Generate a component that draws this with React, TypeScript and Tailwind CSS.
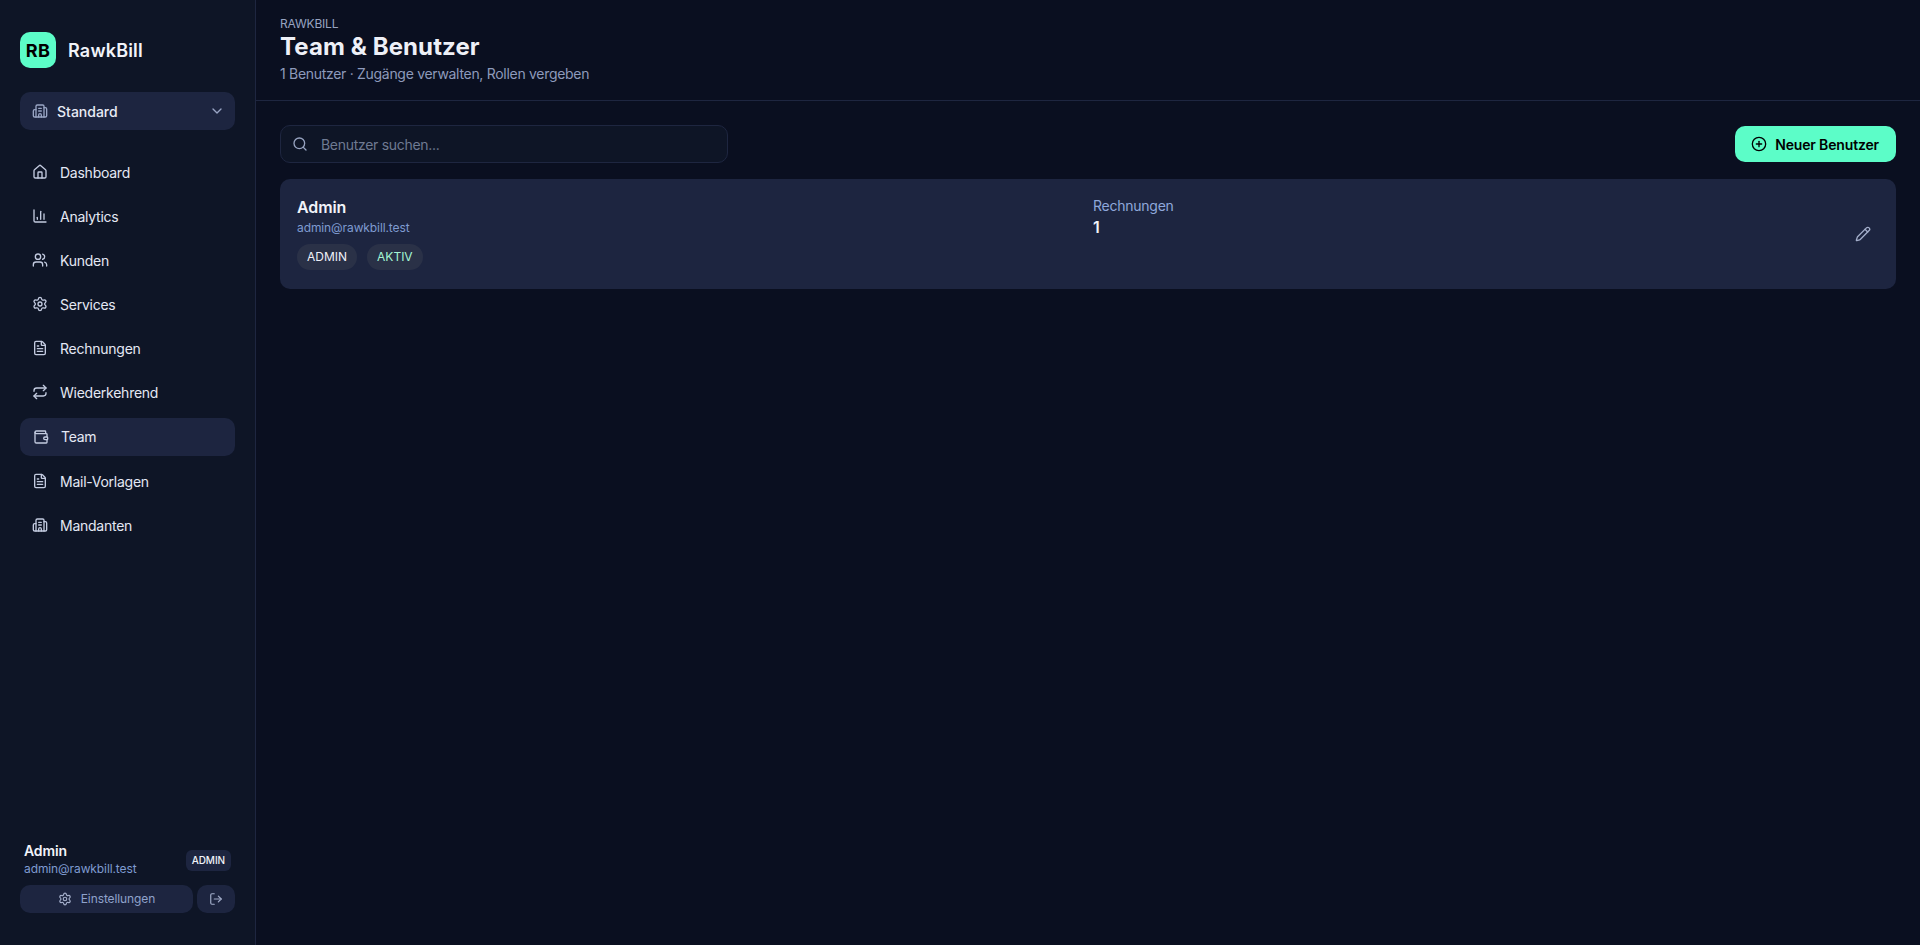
import {
  Building2,
  ChartColumn,
  ChevronDown,
  CirclePlus,
  FileText,
  House,
  LogOut,
  Pencil,
  Repeat,
  Search,
  Settings,
  Users,
  Wallet,
} from "lucide-react";

const navItems = [
  { label: "Dashboard", icon: House },
  { label: "Analytics", icon: ChartColumn },
  { label: "Kunden", icon: Users },
  { label: "Services", icon: Settings },
  { label: "Rechnungen", icon: FileText },
  { label: "Wiederkehrend", icon: Repeat },
  { label: "Team", icon: Wallet, active: true },
  { label: "Mail-Vorlagen", icon: FileText },
  { label: "Mandanten", icon: Building2 },
];

function Sidebar() {
  return (
    <aside className="flex h-[945px] w-[256px] shrink-0 flex-col border-r border-[#1e2640] bg-[#0e1526] px-5 pt-8 pb-[32px]">
      <div className="flex items-center gap-3">
        <div className="flex h-9 w-9 items-center justify-center rounded-[10px] bg-[#5cfdc8] text-[18px] font-bold tracking-[0.3px] text-black">RB</div>
        <span className="text-[18px] font-semibold tracking-[0.2px] text-[#f1f3f9]">RawkBill</span>
      </div>

      <button className="mt-6 flex h-[38px] w-full items-center rounded-[10px] bg-[#1d2540] pr-[10px] pl-3 text-[14px] font-medium text-[#e8ebf5]">
        <Building2 className="h-4 w-4 text-[#99a5c4]" />
        <span className="ml-[9px]">Standard</span>
        <ChevronDown className="ml-auto h-4 w-4 text-[#99a5c4]" />
      </button>

      <nav className="mt-[23px] flex flex-col gap-[6px]">
        {navItems.map((item) => {
          const Icon = item.icon;
          return (
            <a
              key={item.label}
              className={`flex h-[38px] items-center gap-3 rounded-[10px] text-[14px] tracking-[-0.25px] text-[#e4e8f4] ${item.active ? "my-[0.5px] bg-[#1d2540] pr-3 pl-[13px]" : "px-3"}`}
            >
              <Icon className="h-4 w-4 shrink-0 text-[#c3cbe0]" />
              {item.label}
            </a>
          );
        })}
      </nav>

      <div className="mt-auto">
        <div className="flex items-center justify-between px-1">
          <div>
            <div className="text-[14px] leading-[18px] font-semibold tracking-[-0.1px] text-[#f1f3f9]">Admin</div>
            <div className="text-[12px] leading-[18px] tracking-[-0.1px] text-[#7f9bd0]">admin@rawkbill.test</div>
          </div>
          <span className="rounded-md bg-[#1d2540] px-[6px] py-[3px] text-[10px] font-medium tracking-[-0.1px] text-[#f1f3f9]">ADMIN</span>
        </div>
        <div className="mt-[7px] flex gap-1">
          <button className="flex h-7 flex-1 items-center justify-center gap-[9px] rounded-[10px] bg-[#1d2540] text-[12px] tracking-[-0.1px] text-[#8fa2cb]">
            <Settings className="h-[14px] w-[14px] text-[#a3aeca]" />
            Einstellungen
          </button>
          <button className="flex h-7 w-[38px] items-center justify-center rounded-[10px] bg-[#1d2540] text-[#a3aeca]">
            <LogOut className="h-[14px] w-[14px]" />
          </button>
        </div>
      </div>
    </aside>
  );
}

export default function App() {
  return (
    <div className="flex h-[945px] overflow-hidden bg-[#0a0f20] font-['Inter',sans-serif]">
      <Sidebar />
      <main className="flex-1">
        <header className="h-[101px] border-b border-[#1e2640] px-6 pt-[16px]">
          <div className="text-[12px] leading-[16px] tracking-[-0.2px] text-[#97a3c0]">RAWKBILL</div>
          <h1 className="text-[24px] leading-[30px] font-bold tracking-[0.1px] text-[#eef0f7]">Team &amp; Benutzer</h1>
          <p className="mt-[2px] text-[14px] leading-[20px] tracking-[-0.3px] text-[#8e9abb]">1 Benutzer · Zugänge verwalten, Rollen vergeben</p>
        </header>

        <div className="px-6 pt-6">
          <div className="flex items-center justify-between">
            <div className="flex h-[38px] w-[448px] items-center gap-[13px] rounded-[10px] border border-[#1e2640] bg-[#0e1526] px-[11px] text-[14px] tracking-[-0.3px] text-[#6f7a92]">
              <Search className="h-4 w-4 text-[#97a3c0]" />
              Benutzer suchen...
            </div>
            <button className="flex h-9 items-center gap-2 rounded-[10px] bg-[#5cfdc8] pr-[17px] pl-4 text-[14px] font-semibold tracking-[-0.15px] text-black">
              <CirclePlus className="h-4 w-4" />
              Neuer Benutzer
            </button>
          </div>

          <div className="mt-4 grid h-[110px] grid-cols-2 rounded-[10px] bg-[#1d2540] p-[17px]">
            <div>
              <div className="text-[16px] leading-[22px] font-semibold tracking-[-0.1px] text-[#f1f3f9]">Admin</div>
              <div className="mt-[2px] text-[12px] leading-[16px] tracking-[-0.1px] text-[#7f9bd0]">admin@rawkbill.test</div>
              <div className="mt-[8px] flex gap-[10px]">
                <span className="rounded-full bg-[#2a3147] px-[10px] py-[5px] text-[12px] leading-[16px] text-[#eef0f7]">ADMIN</span>
                <span className="rounded-full bg-[#2a3147] px-[10px] py-[5px] text-[12px] leading-[16px] text-[#a5f5d5]">AKTIV</span>
              </div>
            </div>
            <div className="flex items-center justify-between">
              <div className="ml-[5px] self-start">
                <div className="text-[14px] leading-[20px] tracking-[-0.25px] text-[#8fa8db]">Rechnungen</div>
                <div className="text-[16px] leading-[22px] font-semibold text-[#f1f3f9]">1</div>
              </div>
              <Pencil className="mr-[8px] h-4 w-4 text-[#a3aeca]" />
            </div>
          </div>
        </div>
      </main>
    </div>
  );
}
